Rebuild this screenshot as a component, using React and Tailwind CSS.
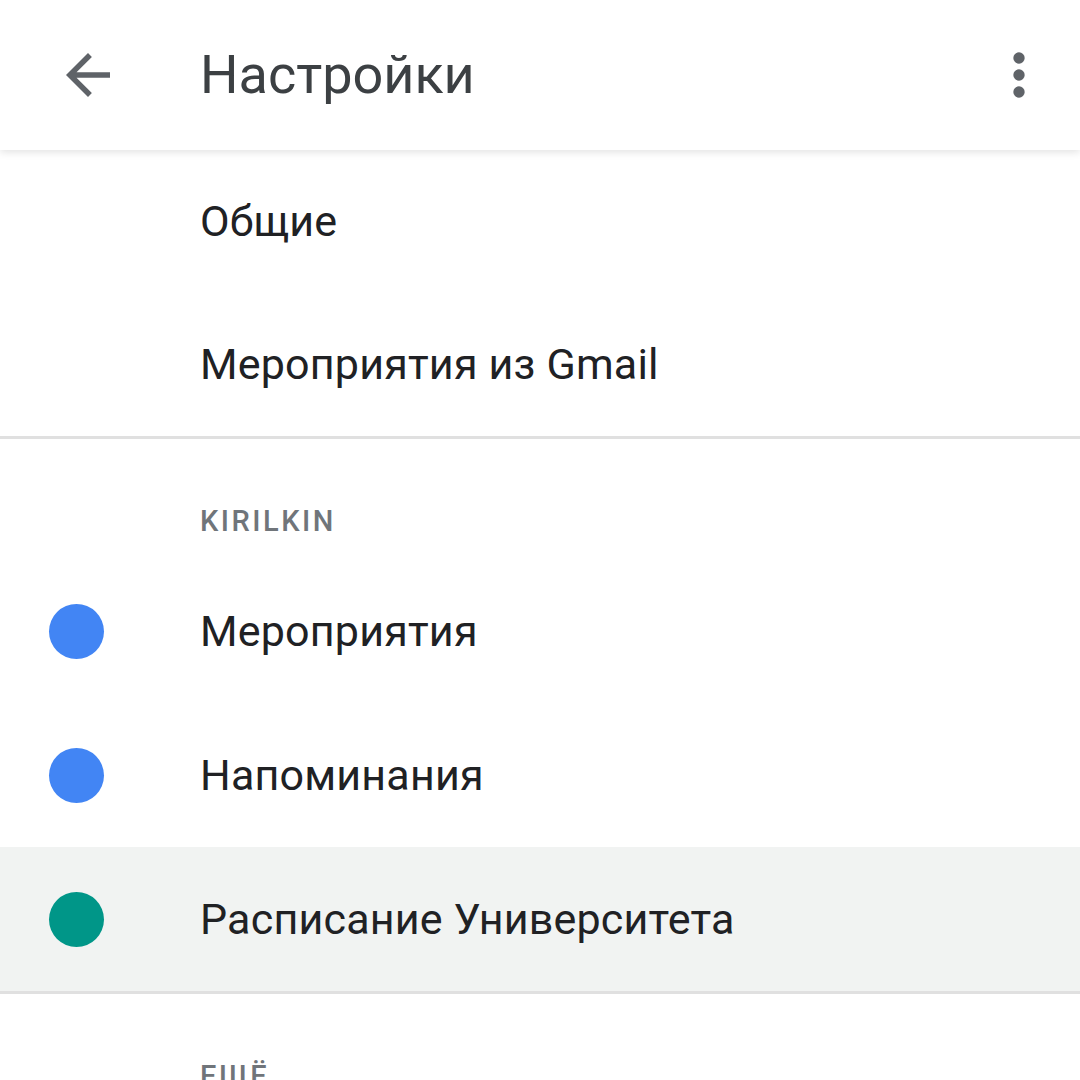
import React from 'react';

const Row = ({ label, color, active, h = 'h-[144px]' }) => (
    <div className={`${h} flex items-center ${active ? 'bg-[#f1f3f2]' : ''}`}>
        <div className="w-[200px] flex items-center pl-[49px]">
            {color && <span className={`block w-[55px] h-[55px] rounded-full ${color}`} />}
        </div>
        <span className="text-[43px] text-[#202124] tracking-[0.2px]">{label}</span>
    </div>
);

const SectionTitle = ({ children }) => (
    <div className="h-[120px] pt-[68px] pl-[200px]">
        <span className="text-[29px] font-medium tracking-[2.5px] text-[#70757a] leading-none">{children}</span>
    </div>
);

const App = () => {
    return (
        <div className="w-[1080px] h-[1080px] overflow-hidden bg-white font-['Roboto',sans-serif]">
            <header className="relative z-10 h-[150px] flex items-center bg-white shadow-[0_2px_8px_rgba(0,0,0,0.12)]">
                <div className="w-[200px] flex items-center pl-[55px]">
                    <svg width="66" height="66" viewBox="0 0 24 24" fill="#5f6368">
                        <path d="M20 11H7.83l5.59-5.59L12 4l-8 8 8 8 1.41-1.41L7.83 13H20v-2z" />
                    </svg>
                </div>
                <h1 className="flex-1 text-[54px] text-[#3c4043] font-normal -mt-[2px]">Настройки</h1>
                <div className="pr-[27px]">
                    <svg width="68" height="68" viewBox="0 0 24 24" fill="#5f6368">
                        <circle cx="12" cy="6" r="2" />
                        <circle cx="12" cy="12" r="2" />
                        <circle cx="12" cy="18" r="2" />
                    </svg>
                </div>
            </header>

            <div className="border-b-[3px] border-[#e0e0e0]">
                <Row label="Общие" h="h-[143px]" />
                <Row label="Мероприятия из Gmail" h="h-[143px]" />
            </div>

            <div className="border-b-[3px] border-[#e0e0e0]">
                <SectionTitle>KIRILKIN</SectionTitle>
                <Row label="Мероприятия" color="bg-[#4285f4]" />
                <Row label="Напоминания" color="bg-[#4285f4]" />
                <Row label="Расписание Университета" color="bg-[#009688]" active />
            </div>

            <SectionTitle>ЕЩЁ</SectionTitle>
        </div>
    );
};

export default App;
